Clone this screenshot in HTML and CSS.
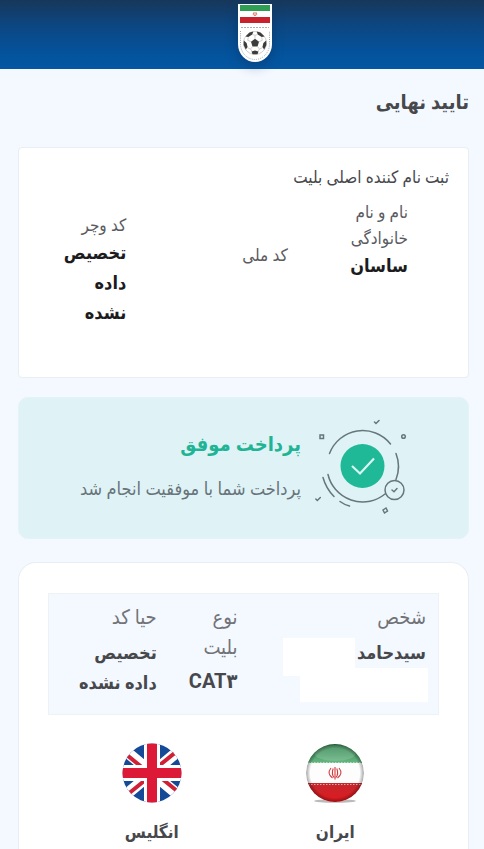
FILE: index.html
```html
<!doctype html>
<html lang="fa" dir="rtl">

<head>
  <meta charset="utf-8">
  <meta name="viewport" content="width=device-width, initial-scale=1">
  <title>تایید نهایی</title>
  <link rel="stylesheet" href="styles.css">
</head>

<body>
  <header class="topbar">
    <svg class="logo" viewBox="0 0 36 60" role="img" aria-label="logo">
      <path d="M1 1h34v40a17 18 0 0 1-34 0z" fill="#fff"/>
      <rect x="3" y="2" width="30" height="6" fill="#2f9e55"/>
      <rect x="3" y="14" width="30" height="6" fill="#c9222c"/>
      <path d="M16.500 9.500q-1 2 1 3.200M19.500 9.500q1 2-1 3.200M18 9v4" stroke="#d8513c" stroke-width=".8" fill="none"/>
      <path d="M4 24.500h28" stroke="#9a9a9a" stroke-width=".8" stroke-dasharray="2 1"/>
      <path d="M3.500 28v13a14.500 15.500 0 0 0 29 0V28" stroke="#9ba4ad" stroke-width="1" stroke-dasharray="1 1.200" fill="none"/>
      <circle cx="18" cy="40" r="11.500" fill="#fff" stroke="#bbb" stroke-width=".7"/>
      <path d="M18 35.800l4 2.900-1.500 4.700h-5L14 38.700z" fill="#3c3c3c"/>
      <path d="M12.500 29.500l3.800-1-1 3-4 2.500-2.800-.5zM23.500 29.500l-3.800-1 1 3 4 2.500 2.800-.5zM6.800 37.500l2.800 2.500 1 4-1.800 2.600-2.200-4.600zM29.200 37.500l-2.800 2.500-1 4 1.800 2.600 2.200-4.600zM14.500 48.500l3.500-1 3.500 1-1 2.800h-5z" fill="#3c3c3c"/>
      <path d="M18 35.800V32.300l-2.700-.8M18 32.300l2.700-.8M14 38.700l-3.300-1.400.6-3M22 38.700l3.300-1.400-.6-3M15.500 43.400l-2 2.700-3.200-1.600M20.500 43.400l2 2.700 3.200-1.600M13.500 46.100l1.500 2.100M22.500 46.100l-1.500 2.100" stroke="#bbb" stroke-width=".7" fill="none"/>
    </svg>
  </header>

  <main class="page">
    <h1 class="page-title">تایید نهایی</h1>

    <section class="card buyer">
      <h2 class="buyer-title">ثبت نام کننده اصلی بلیت</h2>
      <dl class="buyer-grid">
        <div class="field">
          <dt>نام و نام<br>خانوادگی</dt>
          <dd class="tall">ساسان</dd>
        </div>
        <div class="field">
          <dt>کد ملی</dt>
          <dd></dd>
        </div>
        <div class="field">
          <dt>کد وچر</dt>
          <dd>تخصیص<br>داده<br>نشده</dd>
        </div>
      </dl>
    </section>

    <section class="card success">
      <svg class="success-icon" viewBox="0 0 94 98" fill="none" stroke="#66777b" stroke-width="1.500" stroke-linecap="round" aria-hidden="true">
        <circle cx="47.500" cy="47" r="22" fill="#1fb998" stroke="none"/>
        <path d="M37 47l8 7.500L59 39.500" stroke="#d9f5f2" stroke-width="2.200" stroke-linecap="butt"/>
        <path d="M14.500 34.500A35.500 35.500 0 0 1 75.500 25M81 34.500a36 36 0 0 1 0 26M70 75A35.500 35.500 0 0 1 13 55.500"/>
        <path d="M8 58.500q3 11 11 19M25 82.500q4 3 9.500 4.500"/>
        <circle cx="79.500" cy="71" r="9.500"/>
        <path d="M77 71l2 1.800 3-3.300M59.500 3l1.500 1.500 3-3M.8 80l1.500 1.500 3-3"/>
        <rect x="5" y="16" width="3.500" height="3.500"/>
        <circle cx="88.500" cy="17.500" r="1.800"/>
        <path d="M68 91l3-2 1.500 3-3 2z"/>
      </svg>
      <div class="success-text">
        <h2>پرداخت موفق</h2>
        <p>پرداخت شما با موفقیت انجام شد</p>
      </div>
    </section>

    <section class="card ticket">
      <dl class="ticket-info">
        <div class="field">
          <dt>شخص</dt>
          <dd class="person">
            <span class="person-name">سیدحامد</span>
            <span class="blank blank-short"></span>
            <span class="blank blank-long"></span>
          </dd>
        </div>
        <div class="field">
          <dt>نوع<br>بلیت</dt>
          <dd class="cat">CAT۳</dd>
        </div>
        <div class="field">
          <dt>حیا کد</dt>
          <dd>تخصیص<br>داده نشده</dd>
        </div>
      </dl>

      <div class="teams">
        <figure class="team">
          <svg class="flag" viewBox="0 0 60 60" aria-hidden="true">
            <defs>
              <clipPath id="ball"><circle cx="30" cy="30" r="29"/></clipPath>
              <radialGradient id="shade" cx=".5" cy=".5" r=".5">
                <stop offset=".85" stop-color="#000" stop-opacity="0"/>
                <stop offset="1" stop-color="#000" stop-opacity=".35"/>
              </radialGradient>
              <linearGradient id="green" x1="0" y1="0" x2="0" y2="1">
                <stop offset="0" stop-color="#2d7f4b"/>
                <stop offset="1" stop-color="#67b782"/>
              </linearGradient>
              <linearGradient id="red" x1="0" y1="0" x2="0" y2="1">
                <stop offset="0" stop-color="#c4282d"/>
                <stop offset="1" stop-color="#e0181f"/>
              </linearGradient>
            </defs>
            <ellipse cx="30" cy="58" rx="21" ry="1.800" fill="#8c8c8c" opacity=".6"/>
            <g clip-path="url(#ball)">
              <path d="M0 0h60v60H0z" fill="#fdfdfd"/>
              <path d="M0 0h60v20H0z" fill="url(#green)"/>
              <path d="M0 40h60v20H0z" fill="url(#red)"/>
              <path d="M0 19.500h60" stroke="#b9dcc4" stroke-dasharray="1.500 1.500"/>
              <path d="M0 41.500h60" stroke="#e8a5a7" stroke-dasharray="1.500 1.500"/>
              <ellipse cx="30" cy="10" rx="21" ry="8" fill="#fff" opacity=".15"/>
              <circle cx="30" cy="30" r="29" fill="url(#shade)"/>
            </g>
            <path d="M30 24v12.500M26 25q-4.500 5.500 1.500 10M34 25q4.500 5.500-1.500 10M28.200 25.500q-2 5.500.8 9M31.800 25.500q2 5.500-.8 9" stroke="#d4393d" stroke-width="1.100" fill="none"/>
          </svg>
          <figcaption>ایران</figcaption>
        </figure>
        <figure class="team">
          <svg class="flag" viewBox="0 0 60 60" aria-hidden="true">
            <defs>
              <clipPath id="round"><circle cx="30" cy="30" r="29.500"/></clipPath>
            </defs>
            <g clip-path="url(#round)">
              <path d="M0 0h60v60H0z" fill="#164a97"/>
              <path d="M0 5l60 50M60 5L0 55" stroke="#fff" stroke-width="11"/>
              <path d="M0 8l27 22M60 52L33 30M60 4L33 26M0 56l27-22" stroke="#cf2036" stroke-width="4"/>
              <path d="M30 0v60M0 30h60" stroke="#fff" stroke-width="16"/>
              <path d="M30 0v60M0 30h60" stroke="#dc1a38" stroke-width="10"/>
            </g>
          </svg>
          <figcaption>انگلیس</figcaption>
        </figure>
      </div>
    </section>
  </main>
</body>

</html>
```
FILE: styles.css
```css
* {
  box-sizing: border-box;
}
body {
  display: flex;
  flex-direction: column;
  min-height: 100vh;
  margin: 0;
  background: #f4f8ff;
  color: #47484c;
  font-family: Roboto, "DejaVu Sans Condensed", "DejaVu Sans", sans-serif;
  font-size: 16px;
}
h1, h2, p, dl, dd, figure {
  margin: 0;
}

/* header */
.topbar {
  display: flex;
  justify-content: center;
  height: 69px;
  padding: 3px 0 0 26px;
  background: linear-gradient(to bottom, #17375a 0%, #0d4680 35%, #04529b 75%, #0457a3 100%);
}
.logo {
  width: 36px;
  height: 60px;
  filter: drop-shadow(0 4px 6px rgba(10, 40, 80, .4));
}

.page {
  display: flex;
  flex-direction: column;
  flex: 1;
  padding: 16px 15px 0 18px;
}
.page-title {
  margin-bottom: 28px;
  font-size: 20px;
  line-height: 34px;
}
.card {
  background: #fff;
  border: 1px solid #e9eef4;
}

/* buyer */
.buyer {
  margin-bottom: 19px;
  padding: 15px 19px 36px;
  border-radius: 4px;
}
.buyer-title {
  margin-bottom: 8px;
  font-size: 17px;
  font-weight: normal;
  line-height: 28px;
}
.buyer-grid {
  display: grid;
  grid-template-columns: 120fr 161fr 88fr;
  align-items: center;
  padding-right: 41px;
}
.buyer-grid dt {
  color: #5a5b5f;
  font-size: 17px;
  line-height: 26px;
}
.buyer-grid dd {
  min-height: 30px;
  color: #1c1c1e;
  font-size: 18px;
  font-weight: bold;
  line-height: 30px;
}
.buyer-grid .tall {
  min-height: 90px;
}

/* payment result */
.success {
  display: flex;
  gap: 14px;
  margin-bottom: 23px;
  padding: 21px 59px;
  background: #dff2f5;
  border-color: #e3f3f7;
  border-radius: 10px;
}
.success-icon {
  flex: none;
  width: 94px;
  height: 98px;
}
.success-text h2 {
  margin: 8px 0 14px;
  color: #1fb496;
  font-size: 20px;
  line-height: 34px;
}
.success-text p {
  color: #67747a;
  font-size: 18px;
  line-height: 28px;
  white-space: nowrap;
}

/* ticket */
.ticket {
  flex: 1;
  padding: 30px 29px 0;
  border-bottom: 0;
  border-radius: 18px 18px 0 0;
}
.ticket-info {
  display: grid;
  grid-template-columns: 189fr 81fr 108fr;
  padding: 8px 12px 16px 0;
  background: #f4f8ff;
  border: 1px solid #edf2f7;
}
.ticket-info dt {
  color: #727377;
  font-size: 20px;
  line-height: 30px;
}
.ticket-info dd {
  margin-top: 6px;
  font-size: 18px;
  font-weight: bold;
  line-height: 30px;
  white-space: nowrap;
}
.ticket-info .cat {
  margin-top: 4px;
  font-size: 20px;
}
.person {
  position: relative;
}
.blank {
  position: absolute;
  background: #fff;
}
.blank-short {
  top: 0;
  right: 71px;
  width: 72px;
  height: 38px;
}
.blank-long {
  top: 30px;
  right: -2px;
  width: 128px;
  height: 34px;
}

.teams {
  display: grid;
  grid-template-columns: 1fr 1fr;
  padding: 28px 12px 0;
}
.team {
  display: flex;
  flex-direction: column;
  align-items: center;
  gap: 14px;
}
.flag {
  width: 60px;
  height: 60px;
}
.team figcaption {
  font-size: 17px;
  font-weight: bold;
  line-height: 30px;
}
```
